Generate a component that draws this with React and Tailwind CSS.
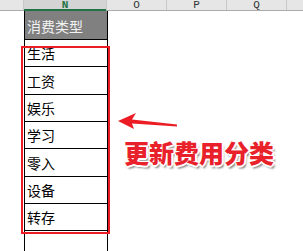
import React from "react";

const rows = [
  { label: "生活", h: "h-[27px]" },
  { label: "工资", h: "h-[28px]" },
  { label: "娱乐", h: "h-[27px]" },
  { label: "学习", h: "h-[27px]" },
  { label: "零入", h: "h-[28px]" },
  { label: "设备", h: "h-[27px]" },
  { label: "转存", h: "h-[27px]" },
];

const cols = [
  { name: "O", w: "w-[60px]" },
  { name: "P", w: "w-[60px]" },
  { name: "Q", w: "w-[60px]" },
];

export default function App() {
  return (
    <div className="relative w-[303px] h-[251px] overflow-hidden bg-white font-['Noto_Sans_CJK_SC',sans-serif]">
      {/* column letters */}
      <div className="flex h-[11px] bg-[#e6e6e6] border-b border-[#ababab]">
        <div className="w-[24px] border-r border-[#c8c8c8]" />
        <div className="relative w-[83px] bg-[#d4d4d4] border-r border-[#c8c8c8] flex justify-center">
          <span className="font-['Liberation_Mono',monospace] text-[11px] leading-[10px] font-bold text-[#217346]">N</span>
          <div className="absolute left-0 right-0 bottom-[-1px] h-[2px] bg-[#217346]" />
        </div>
        {cols.map((c) => (
          <div key={c.name} className={`${c.w} border-r border-[#c8c8c8] flex justify-center`}>
            <span className="font-['Liberation_Mono',monospace] text-[11px] leading-[10px] text-[#333]">{c.name}</span>
          </div>
        ))}
        <div className="flex-1" />
      </div>

      {/* column N cells */}
      <div className="pl-[24px]">
        <div className="w-[84px] border-x border-black">
          <div className="h-[29px] bg-[#808080] border-b border-black flex items-end pb-[5px] pl-[2px]">
            <span className="text-[14px] leading-[16px] text-[#f2f2f2]">消费类型</span>
          </div>
          {rows.map((r) => (
            <div key={r.label} className={`${r.h} border-b border-black flex items-end pb-[5px] pl-[2px]`}>
              <span className="text-[14px] leading-[16px] text-black">{r.label}</span>
            </div>
          ))}
          <div className="h-[20px]" />
        </div>
      </div>

      {/* selection outline */}
      <div className="absolute left-[21px] top-[46px] w-[89px] h-[188px] border-2 border-[#ec1c24]" />

      {/* arrow pointing at the list */}
      <svg className="absolute left-0 top-0" width="303" height="251" viewBox="0 0 303 251">
        <polygon
          points="118,121 136,113 132,119.5 177,124.5 177,126.5 132,123.5 134,129"
          fill="#ec1c24"
        />
      </svg>

      {/* callout label */}
      <div className="absolute left-[124px] top-[137px] text-[25px] leading-[30px] font-black text-[#e8212b] [text-shadow:1px_1px_0_#fff,-1px_-1px_0_#fff,1px_-1px_0_#fff,-1px_1px_0_#fff,0_2px_0_#fff,2px_0_0_#fff,2px_3px_2px_#8a8a8a]">
        更新费用分类
      </div>
    </div>
  );
}
